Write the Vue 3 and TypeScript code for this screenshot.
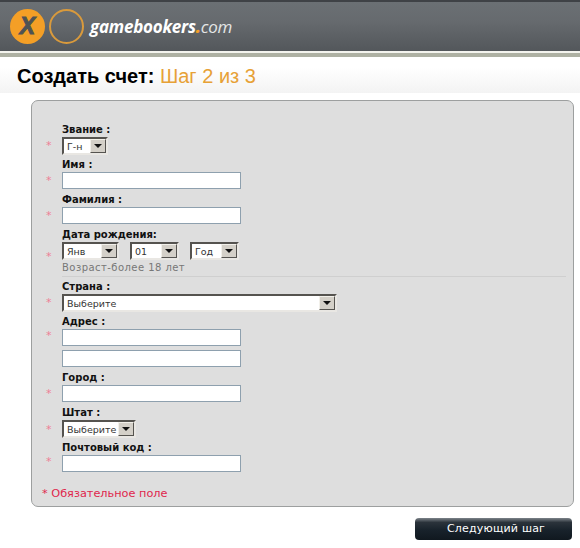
<script setup lang="ts">
interface Field {
  label: string
  kind: 'input' | 'select' | 'date' | 'address'
  value?: string
  width?: number
  starTop: number
}
const fields: Field[] = [
  { label: 'Звание :', kind: 'select', value: 'Г-н', width: 46, starTop: 16 },
  { label: 'Имя :', kind: 'input', starTop: 16 },
  { label: 'Фамилия :', kind: 'input', starTop: 16 },
  { label: 'Дата рождения:', kind: 'date', starTop: 22 },
  { label: 'Страна :', kind: 'select', value: 'Выберите', width: 275, starTop: 16 },
  { label: 'Адрес :', kind: 'address', starTop: 14 },
  { label: 'Город :', kind: 'input', starTop: 16 },
  { label: 'Штат :', kind: 'select', value: 'Выберите', width: 74, starTop: 17 },
  { label: 'Почтовый код :', kind: 'input', starTop: 14 },
]
const dateParts = [
  { value: 'Янв', width: 57 },
  { value: '01', width: 49 },
  { value: 'Год', width: 49 },
]
</script>

<template>
  <div class="page">
    <header class="header">
      <div class="logo">
        <span class="disc">X</span>
        <span class="ring"></span>
        <span class="brand">gamebookers<b>.</b><em>com</em></span>
      </div>
    </header>
    <div class="rule"></div>
    <div class="titlebar">
      <h1>Создать счет: <span>Шаг 2 из 3</span></h1>
    </div>
    <main class="panel">
      <template v-for="f in fields" :key="f.label">
        <div class="field">
          <span class="star" :style="{ marginTop: f.starTop + 'px' }">*</span>
          <div class="body">
            <label>{{ f.label }}</label>
            <input v-if="f.kind === 'input'" class="text" type="text" />
            <template v-else-if="f.kind === 'address'">
              <input class="text" type="text" />
              <input class="text second" type="text" />
            </template>
            <div v-else-if="f.kind === 'date'" class="date">
              <div class="selects">
                <div v-for="d in dateParts" :key="d.value" class="select" :style="{ width: d.width + 'px' }">
                  <span>{{ d.value }}</span><i class="arrow"></i>
                </div>
              </div>
              <p class="hint">Возраст-более 18 лет</p>
            </div>
            <div v-else class="select single" :style="{ width: f.width + 'px' }">
              <span>{{ f.value }}</span><i class="arrow"></i>
            </div>
          </div>
        </div>
        <hr v-if="f.kind === 'date'" class="divider" />
      </template>
      <p class="note">* Обязательное поле</p>
    </main>
    <div class="actions">
      <button class="next" type="button">Следующий шаг</button>
    </div>
  </div>
</template>

<style scoped>
.page {
  width: 580px;
  height: 548px;
  overflow: hidden;
  background: #fff;
  font-family: "DejaVu Sans", Verdana, sans-serif;
}
.header {
  height: 51px;
  box-sizing: border-box;
  background: linear-gradient(#6b7074 0%, #666a6e 40%, #53575b 100%);
  border-top: 2px solid #3f4246;
  padding: 7px 0 0 10px;
}
.logo {
  display: flex;
  align-items: center;
}
.disc {
  width: 35px;
  height: 35px;
  border-radius: 50%;
  background: #f49f26;
  color: #4f5254;
  font: italic 700 23px/35px "Liberation Sans", sans-serif;
  -webkit-text-stroke: 1px #4f5254;
  text-align: center;
}
.ring {
  width: 31px;
  height: 31px;
  margin-left: 4px;
  border: 2px solid #d99a3c;
  border-radius: 50%;
}
.brand {
  margin-left: 6px;
  color: #fff;
  font: italic 700 17px/1 "Open Sans", sans-serif;
  letter-spacing: -0.25px;
}
.brand b {
  color: #f49f26;
}
.brand em {
  font-weight: 400;
  color: #e4e6e6;
}
.rule {
  height: 4px;
  border-top: 2px solid #f4f4ee;
  background: #aeb1a3;
}
.titlebar {
  height: 36px;
  background: linear-gradient(#fff 30%, #f3f3f3);
  padding-left: 17px;
}
h1 {
  margin: 0;
  font: 700 20px/39px "Liberation Sans", Arial, sans-serif;
  color: #000;
}
h1 span {
  font-weight: 400;
  color: #e7a136;
}
.panel {
  box-sizing: border-box;
  width: 543px;
  height: 407px;
  margin: 7px 0 0 31px;
  padding: 22px 7px 0 0;
  background: #dedede;
  border: 1px solid #9d9f9f;
  border-radius: 7px;
}
.field {
  display: flex;
}
.star {
  width: 30px;
  box-sizing: border-box;
  padding-left: 14px;
  color: #ee7f95;
  font-size: 11px;
  line-height: 14px;
  height: 14px;
  flex: none;
}
.body {
  display: flex;
  flex-direction: column;
  align-items: flex-start;
  padding-bottom: 4px;
}
label {
  height: 14px;
  font-size: 10px;
  font-weight: 700;
  line-height: 14px;
  color: #111;
}
.text {
  box-sizing: border-box;
  width: 179px;
  height: 17px;
  margin: 0;
  padding: 0;
  background: #fff;
  border: 1px solid #8ea0ae;
}
.second {
  margin-top: 4px;
}
.select {
  box-sizing: border-box;
  height: 18px;
  display: flex;
  align-items: center;
  justify-content: space-between;
  background: #fff;
  border: 2px solid;
  border-color: #55534f #e9e7e3 #e9e7e3 #55534f;
  padding: 0 0 0 3px;
  font-size: 9.5px;
  color: #333;
}
.single {
  margin-bottom: -1px;
}
.arrow {
  width: 16px;
  height: 14px;
  position: relative;
  background: #d4d0c8;
  border: 1px solid;
  border-color: #f2f0ea #55534f #55534f #f2f0ea;
  box-sizing: border-box;
  flex: none;
}
.arrow::after {
  content: "";
  position: absolute;
  left: 3px;
  top: 4px;
  border: 4px solid transparent;
  border-top: 4px solid #111;
  border-bottom: 0;
}
.selects {
  display: flex;
  gap: 11px;
}
.hint {
  margin: 1px 0 0;
  font-size: 10px;
  line-height: 14px;
  color: #777;
  letter-spacing: 0.45px;
}
.divider {
  margin: -3px 0 3px 30px;
  height: 1px;
  border: 0;
  background: #cfcfcf;
}
.note {
  margin: 11px 0 0 10px;
  color: #e0264c;
  font-size: 11.3px;
  line-height: 14px;
}
.actions {
  display: flex;
  justify-content: flex-end;
  padding: 11px 8px 0 0;
}
.next {
  width: 157px;
  height: 22px;
  padding: 0 0 2px 5px;
  border: 0;
  border-radius: 4px;
  background: linear-gradient(#7d848a 0, #2b333b 20%, #18222b 55%, #10181f 100%);
  color: #fff;
  font: 400 11px/1 "DejaVu Sans", Verdana, sans-serif;
  letter-spacing: 0.2px;
}
</style>

<style>
html, body { margin: 0; background: #fff; }
</style>
